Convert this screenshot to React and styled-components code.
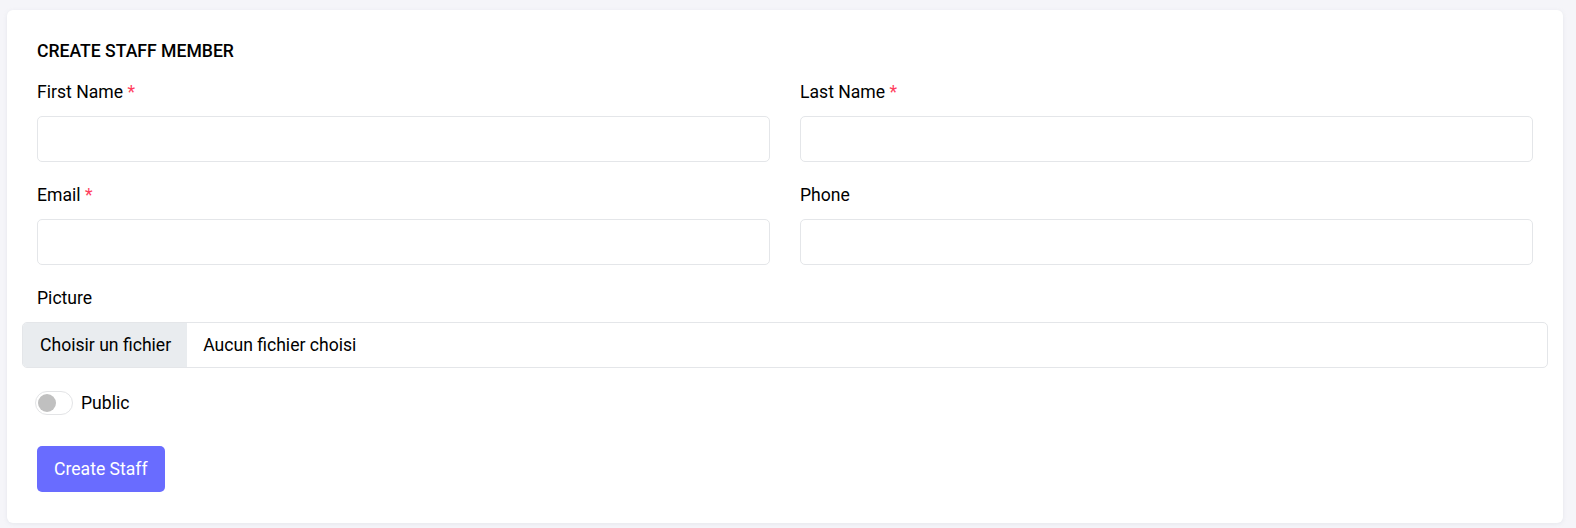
import React from 'react';
import styled, { createGlobalStyle } from 'styled-components';

const GlobalStyle = createGlobalStyle`
  html, body {
    margin: 0;
    padding: 0;
    background: #f5f5f9;
    font-family: Roboto, "Liberation Sans", Arial, sans-serif;
    color: #000;
  }
  * { box-sizing: border-box; }
`;

const Page = styled.div`
  padding: 10px 13px 7px 7px;
`;

const Card = styled.div`
  background: #fff;
  border-radius: 6px;
  box-shadow: 0 1px 4px rgba(161, 172, 184, 0.18);
  padding: 30px 30px 31px;
`;

const Title = styled.h5`
  margin: 0 0 17px;
  font-size: 17.6px;
  font-weight: 500;
  line-height: 22px;
  text-transform: uppercase;
`;

const Grid = styled.div`
  display: grid;
  grid-template-columns: 1fr 1fr;
  column-gap: 30px;
`;

const Group = styled.div`
  margin-bottom: ${(p) => p.$mb ?? 20}px;
`;

const Label = styled.label`
  display: block;
  font-size: 17.6px;
  line-height: 27px;
  margin-bottom: ${(p) => p.$mb || 10}px;
`;

const Req = styled.span`
  color: #ff3e5d;
`;

const Input = styled.input`
  display: block;
  width: 100%;
  height: 46px;
  border: 1px solid #e4e6e9;
  border-radius: 5px;
  padding: 0 16px;
  font-size: 17.6px;
  font-family: inherit;
  outline: none;
`;

const FileBox = styled.div`
  display: flex;
  align-items: stretch;
  height: 46px;
  margin: 0 -15px;
  border: 1px solid #e4e6e9;
  border-radius: 5px;
  overflow: hidden;
  font-size: 17.6px;
`;

const FileButton = styled.span`
  display: flex;
  align-items: center;
  padding: 0 16px 0 17px;
  background: #e9ecef;
`;

const FileName = styled.span`
  display: flex;
  align-items: center;
  padding: 0 16px;
`;

const SwitchRow = styled.label`
  display: flex;
  align-items: center;
  gap: 8px;
  margin: 23px 0 31px -2px;
  font-size: 17.6px;
  line-height: 24px;
`;

const Track = styled.span`
  position: relative;
  width: 38px;
  height: 24px;
  border: 1px solid #e3e4e6;
  border-radius: 12px;
  background: #fff;
`;

const Knob = styled.span`
  position: absolute;
  top: 2px;
  left: 2px;
  width: 18px;
  height: 18px;
  border-radius: 50%;
  background: #c0c0c0;
`;

const Button = styled.button`
  height: 46px;
  padding: 0 17px;
  border: none;
  border-radius: 5px;
  background: #696cff;
  color: #fff;
  font-family: inherit;
  font-size: 17.6px;
`;

const fields = [
  { name: 'First Name', required: true },
  { name: 'Last Name', required: true },
  { name: 'Email', required: true },
  { name: 'Phone', required: false },
];

export default function App() {
  return (
    <>
      <GlobalStyle />
      <Page>
        <Card>
          <Title>Create Staff Member</Title>
          <Grid>
            {fields.map((f) => (
              <Group key={f.name}>
                <Label>
                  {f.name}
                  {f.required && <Req> *</Req>}
                </Label>
                <Input type="text" />
              </Group>
            ))}
          </Grid>
          <Group $mb={0}>
            <Label $mb={10}>Picture</Label>
            <FileBox>
              <FileButton>Choisir un fichier</FileButton>
              <FileName>Aucun fichier choisi</FileName>
            </FileBox>
          </Group>
          <SwitchRow>
            <Track>
              <Knob />
            </Track>
            Public
          </SwitchRow>
          <Button>Create Staff</Button>
        </Card>
      </Page>
    </>
  );
}
